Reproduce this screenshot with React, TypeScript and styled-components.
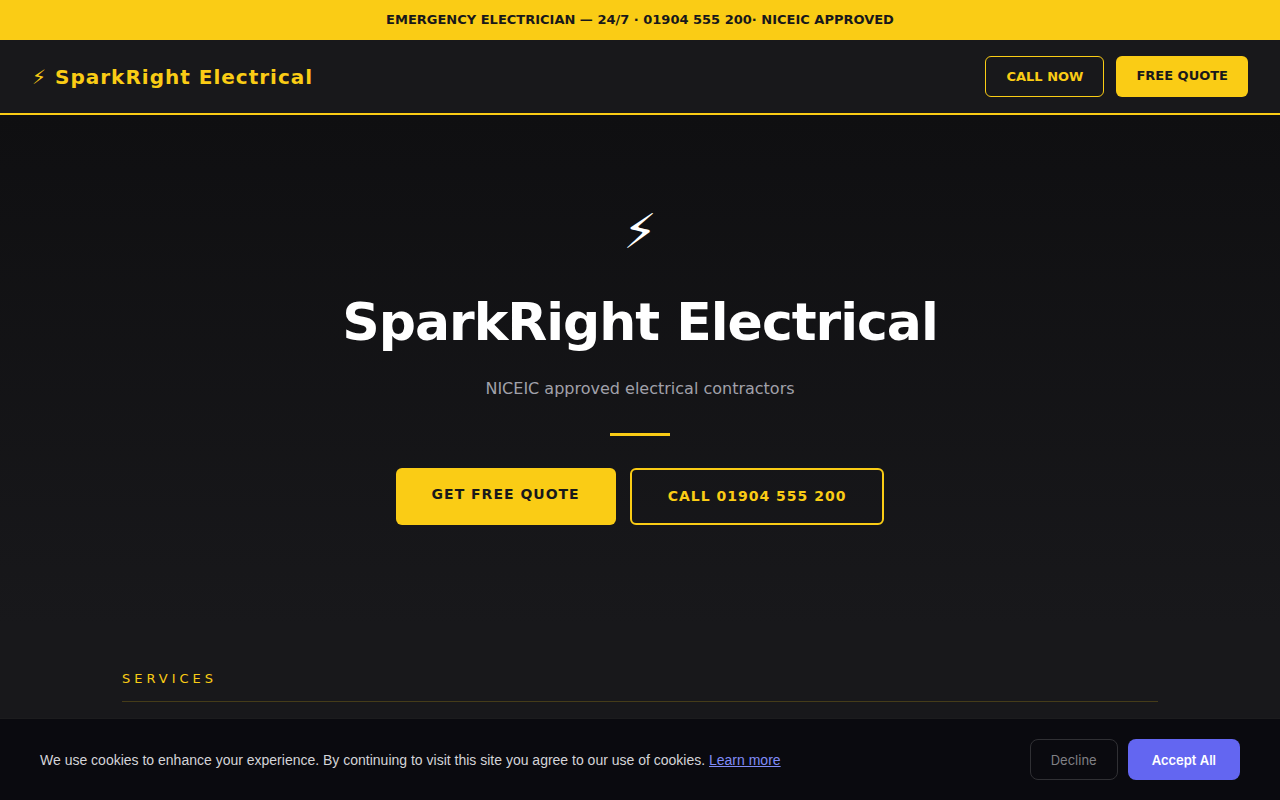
import React from "react";
import styled, { createGlobalStyle } from "styled-components";

const yellow = "#facc15";
const ink = "#18181b";

const GlobalStyle = createGlobalStyle`
  * { box-sizing: border-box; }
  body {
    margin: 0;
    background: #18181b;
    color: #ffffff;
    font-family: "DejaVu Sans", sans-serif;
  }
  h1, h2, p { margin: 0; }
`;

const Page = styled.div`
  display: flex;
  flex-direction: column;
  min-height: 100vh;
`;

const Alert = styled.p`
  padding: 12px 20px;
  background: ${yellow};
  color: ${ink};
  font-size: 13px;
  font-weight: 700;
  line-height: 16px;
  text-align: center;
`;

const Nav = styled.header`
  display: flex;
  align-items: center;
  justify-content: space-between;
  padding: 16px 32px;
  background: ${ink};
  border-bottom: 2px solid ${yellow};
`;

const Brand = styled.a`
  color: ${yellow};
  font-size: 20px;
  font-weight: 700;
  line-height: 24px;
  letter-spacing: 1px;
  text-decoration: none;
`;

const Actions = styled.div<{ $gap: number }>`
  display: flex;
  justify-content: center;
  gap: ${(p) => p.$gap}px;
`;

const NavLink = styled.a<{ $outline?: boolean }>`
  padding: 12px 20px;
  border: ${(p) => (p.$outline ? `1px solid ${yellow}` : "0")};
  border-radius: 6px;
  background: ${(p) => (p.$outline ? "transparent" : yellow)};
  color: ${(p) => (p.$outline ? yellow : ink)};
  font-size: 13px;
  font-weight: 700;
  line-height: 15px;
  text-decoration: none;
`;

const HeroLink = styled(NavLink)`
  padding: 18px 36px;
  border-width: ${(p) => (p.$outline ? 2 : 0)}px;
  font-size: 14px;
  line-height: 17px;
  letter-spacing: 1px;
`;

const Hero = styled.section`
  display: flex;
  flex-direction: column;
  align-items: center;
  padding: 88px 32px 100px;
  background: linear-gradient(180deg, #0f0f11 0%, #18181b 100%);
  text-align: center;
`;

const Bolt = styled.div`
  margin-bottom: 32px;
  font-size: 48px;
  line-height: 56px;
`;

const Title = styled.h1`
  margin-bottom: 26px;
  font-size: 52px;
  font-weight: 700;
  line-height: 62px;
  letter-spacing: -1px;
`;

const Tagline = styled.p`
  color: #a1a1aa;
  font-size: 16px;
  line-height: 20px;
`;

const Divider = styled.div`
  width: 60px;
  height: 3px;
  margin: 34px 0 32px;
  background: ${yellow};
`;

const Services = styled.section`
  width: 100%;
  max-width: 1100px;
  margin: 0 auto;
  padding: 45px 32px 88px;
`;

const SectionTitle = styled.h2`
  padding-bottom: 14px;
  border-bottom: 1px solid rgba(250, 204, 21, 0.2);
  color: ${yellow};
  font-size: 13px;
  font-weight: 400;
  line-height: 17px;
  letter-spacing: 4px;
`;

const CookieBar = styled.aside`
  position: fixed;
  right: 0;
  bottom: 0;
  left: 0;
  display: flex;
  align-items: center;
  justify-content: space-between;
  padding: 20px 40px;
  border-top: 1px solid #1c1c1e;
  background: #0a0a0f;
  color: #d4d4d8;
  font-family: "Liberation Sans", sans-serif;
  font-size: 14px;
  line-height: 20px;
`;

const LearnMore = styled.a`
  color: #818cf8;
  text-decoration: underline;
`;

const CookieButton = styled.button<{ $primary?: boolean }>`
  height: 41px;
  padding: 0 ${(p) => (p.$primary ? 24 : 20)}px;
  border: ${(p) => (p.$primary ? "0" : "1px solid #303034")};
  border-radius: 8px;
  background: ${(p) => (p.$primary ? "#6366f1" : "transparent")};
  color: ${(p) => (p.$primary ? "#ffffff" : "#808085")};
  font-family: Inter, sans-serif;
  font-size: 13px;
  font-weight: ${(p) => (p.$primary ? 600 : 400)};
  cursor: pointer;
`;

export default function App() {
  return (
    <Page>
      <GlobalStyle />
      <Alert>EMERGENCY ELECTRICIAN — 24/7 · 01904 555 200· NICEIC APPROVED</Alert>
      <Nav>
        <Brand href="#">⚡ SparkRight Electrical</Brand>
        <Actions $gap={12}>
          <NavLink href="tel:01904555200" $outline>CALL NOW</NavLink>
          <NavLink href="#quote">FREE QUOTE</NavLink>
        </Actions>
      </Nav>
      <main>
        <Hero>
          <Bolt>⚡</Bolt>
          <Title>SparkRight Electrical</Title>
          <Tagline>NICEIC approved electrical contractors</Tagline>
          <Divider />
          <Actions $gap={14}>
            <HeroLink href="#quote">GET FREE QUOTE</HeroLink>
            <HeroLink href="tel:01904555200" $outline>CALL 01904 555 200</HeroLink>
          </Actions>
        </Hero>
        <Services>
          <SectionTitle>SERVICES</SectionTitle>
        </Services>
      </main>
      <CookieBar aria-label="Cookie consent">
        <p>
          We use cookies to enhance your experience. By continuing to visit this site you agree to our use of cookies.{" "}
          <LearnMore href="#cookies">Learn more</LearnMore>
        </p>
        <Actions $gap={10}>
          <CookieButton type="button">Decline</CookieButton>
          <CookieButton type="button" $primary>Accept All</CookieButton>
        </Actions>
      </CookieBar>
    </Page>
  );
}
